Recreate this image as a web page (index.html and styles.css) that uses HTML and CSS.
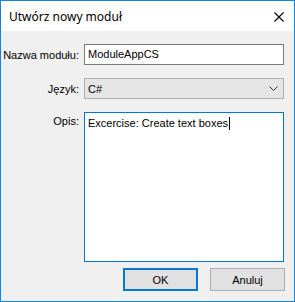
FILE: index.html
```html
<!DOCTYPE html>
<html lang="pl">
<head>
    <meta charset="UTF-8">
    <meta name="viewport" content="width=device-width, initial-scale=1.0">
    <title>Utwórz nowy moduł</title>
    <link rel="stylesheet" href="styles.css">
</head>
<body>
    <div class="dialog">
        <div class="title-bar">
            <span class="title">Utwórz nowy moduł</span>
            <svg class="close" width="10" height="10" viewBox="0 0 10 10">
                <path d="M0.5 0.5 L9.5 9.5 M9.5 0.5 L0.5 9.5" stroke="#000" stroke-width="1.1" fill="none"/>
            </svg>
        </div>
        <div class="content">
            <form class="form">
                <label class="form-label" for="name">Nazwa modułu:</label>
                <div class="text-input" id="name">ModuleAppCS</div>

                <label class="form-label" for="lang">Język:</label>
                <div class="combo" id="lang">
                    <span>C#</span>
                    <svg width="9" height="5" viewBox="0 0 9 5">
                        <path d="M0.5 0.5 L4.5 4.5 L8.5 0.5" stroke="#333" stroke-width="1" fill="none"/>
                    </svg>
                </div>

                <label class="form-label label-top" for="desc">Opis:</label>
                <div class="text-area" id="desc">Excercise: Create text boxes<span class="caret"></span></div>
            </form>
            <div class="buttons">
                <button type="button" class="btn btn-default">OK</button>
                <button type="button" class="btn">Anuluj</button>
            </div>
        </div>
    </div>
</body>
</html>
```

FILE: styles.css
```css
body {
    margin: 0;
    font-family: "Liberation Sans", Arial, sans-serif;
    font-size: 11px;
    color: #000;
}

.dialog {
    width: 295px;
    height: 302px;
    box-sizing: border-box;
    border: 1px solid #1883d7;
    background-color: #f0f0f0;
    display: flex;
    flex-direction: column;
}

.title-bar {
    height: 30px;
    background-color: #fff;
    display: flex;
    align-items: center;
    justify-content: space-between;
    padding: 0 10px 0 8px;
    flex-shrink: 0;
}

.title {
    font-family: "Noto Sans", sans-serif;
    font-size: 12px;
    padding-top: 1px;
}

.close {
    margin-top: 1px;
}

.content {
    padding: 13px 9px 0 0;
}

.form {
    display: grid;
    grid-template-columns: 78px 200px;
    column-gap: 5px;
    row-gap: 13px;
}

.form-label {
    text-align: right;
    align-self: center;
    white-space: nowrap;
}

.label-top {
    align-self: start;
    padding-top: 3px;
}

.text-input {
    height: 21px;
    box-sizing: border-box;
    border: 1px solid #7a7a7a;
    background-color: #fff;
    padding: 0 3px;
    line-height: 19px;
}

.combo {
    height: 21px;
    box-sizing: border-box;
    border: 1px solid #adadad;
    background-color: #e5e5e5;
    padding: 0 5px 0 3px;
    display: flex;
    align-items: center;
    justify-content: space-between;
}

.text-area {
    height: 150px;
    box-sizing: border-box;
    border: 1px solid #0078d7;
    background-color: #fff;
    padding: 4px 3px;
    line-height: 13px;
}

.caret {
    display: inline-block;
    width: 1px;
    height: 13px;
    background-color: #000;
    vertical-align: -3px;
    margin-left: 1px;
}

.buttons {
    display: flex;
    justify-content: flex-end;
    gap: 12px;
    margin-top: 6px;
}

.btn {
    width: 75px;
    height: 23px;
    box-sizing: border-box;
    border: 1px solid #adadad;
    background-color: #e1e1e1;
    font-family: inherit;
    font-size: 11px;
    color: #000;
    padding: 0;
}

.btn-default {
    border: 2px solid #0078d7;
}
```
